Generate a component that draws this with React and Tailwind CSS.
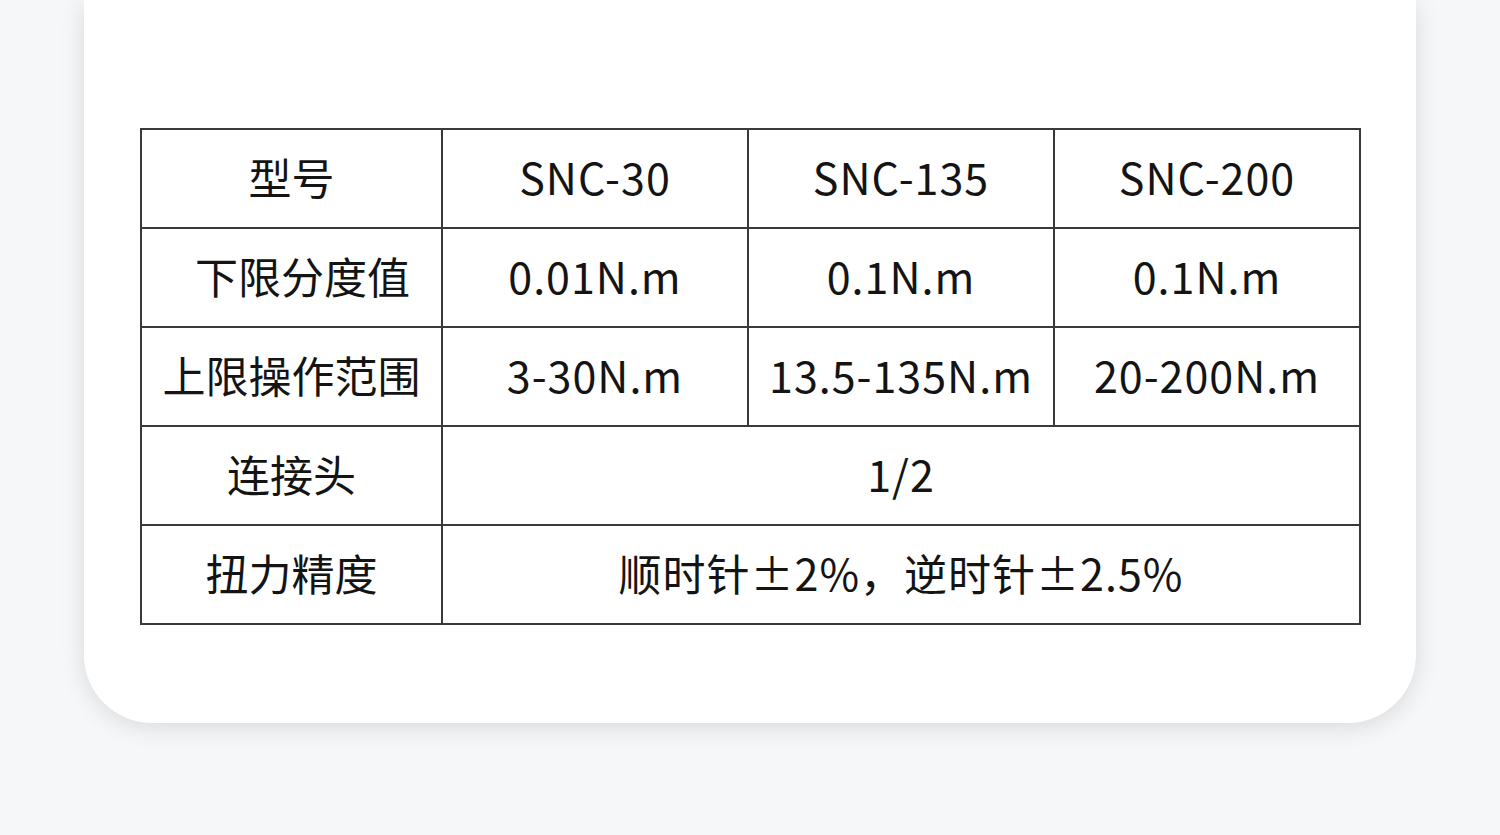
const rows = [
  { label: "型号", cells: ["SNC-30", "SNC-135", "SNC-200"] },
  { label: "下限分度值", indent: true, cells: ["0.01N.m", "0.1N.m", "0.1N.m"] },
  { label: "上限操作范围", cells: ["3-30N.m", "13.5-135N.m", "20-200N.m"] },
  { label: "连接头", span: "1/2" },
  { label: "扭力精度", span: "顺时针±2%，逆时针±2.5%" },
];

export default function App() {
  return (
    <div
      className="h-[835px] w-[1500px] overflow-hidden bg-[#f6f7f9]"
      style={{ fontFamily: '"Noto Sans CJK SC", "Noto Sans", sans-serif' }}
    >
      <div className="mx-[84px] h-[723px] rounded-b-[68px] bg-white pt-[128px] pl-[56px] pr-[55px] shadow-[0_4px_24px_rgba(0,0,0,0.12)]">
        <table className="w-full border-collapse text-[43px] leading-none text-[#141414]">
          <colgroup>
            <col className="w-[301px]" />
            <col className="w-[306px]" />
            <col className="w-[306px]" />
            <col className="w-[306px]" />
          </colgroup>
          <tbody>
            {rows.map((row, i) => (
              <tr key={i} className="h-[99px]">
                <td
                  className={
                    row.indent
                      ? "border-2 border-[#3a3a3a] pb-1 pl-[22px] text-center align-middle"
                      : "border-2 border-[#3a3a3a] pb-1 text-center align-middle"
                  }
                >
                  {row.label}
                </td>
                {row.span ? (
                  <td
                    colSpan={3}
                    className="border-2 border-[#3a3a3a] pb-1 text-center align-middle tracking-[1px]"
                  >
                    {row.span}
                  </td>
                ) : (
                  row.cells.map((c, j) => (
                    <td
                      key={j}
                      className="border-2 border-[#3a3a3a] pb-1 text-center align-middle tracking-[1px]"
                    >
                      {c}
                    </td>
                  ))
                )}
              </tr>
            ))}
          </tbody>
        </table>
      </div>
    </div>
  );
}
